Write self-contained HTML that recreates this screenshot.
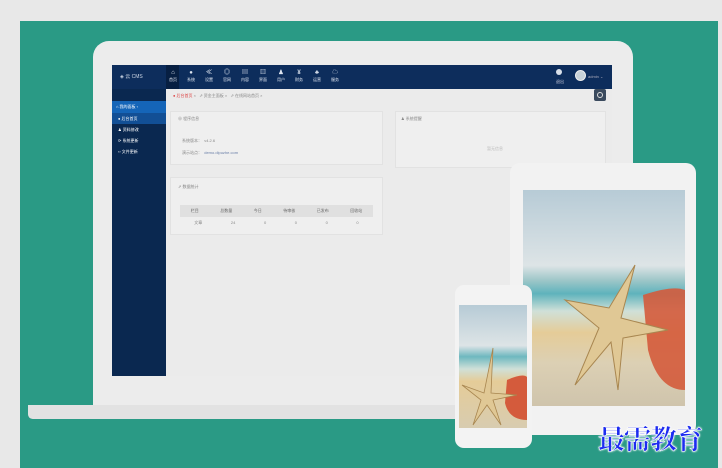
<!DOCTYPE html><html><head><meta charset="utf-8"><style>
*{margin:0;padding:0;box-sizing:border-box}
body{width:722px;height:468px;background:#e8e8e8;position:relative;overflow:hidden;font-family:"Liberation Sans","Noto Sans CJK SC",sans-serif}
.abs{position:absolute}
.t{font-size:4px;color:#888}
.nav{display:flex;gap:0}
.nav div{width:18px;text-align:center;color:#dfe6f0;font-size:4px;line-height:6px}
.nav b{display:block;font-size:6px;line-height:8px}
</style></head><body>
<div class="abs" style="left:20px;top:21px;width:698px;height:447px;background:#2a9a85"></div>
<div class="abs" style="left:93px;top:41px;width:540px;height:372px;background:#ececec;border-radius:16px 16px 0 0"></div>
<div class="abs" style="left:28px;top:405px;width:470px;height:14px;background:#e2e2e2;border-radius:0 0 30px 10px"></div>
<div class="abs" style="left:112px;top:65px;width:500px;height:311px;background:#ebebeb"></div>
<div class="abs" style="left:112px;top:65px;width:500px;height:24px;background:#0d2d5c"></div>
<div class="abs" style="left:112px;top:89px;width:54px;height:287px;background:#0a2850"></div>
<div class="abs" style="left:112px;top:101px;width:54px;height:12px;background:#1565b8"></div>
<div class="abs" style="left:112px;top:113px;width:54px;height:11px;background:#124f95"></div>
<div class="abs" style="left:166px;top:65px;width:13px;height:24px;background:#071f42"></div>
<div class="abs t" style="left:120px;top:73px;color:#cfd8e6;font-size:5px">◈ 云 CMS</div>
<div class="abs nav" style="left:164px;top:69px"><div><b>⌂</b>首页</div><div><b>●</b>系统</div><div><b>≪</b>设置</div><div><b>◎</b>官网</div><div><b>▤</b>内容</div><div><b>▥</b>界面</div><div><b>♟</b>用户</div><div><b>¥</b>财务</div><div><b>♣</b>运营</div><div><b>☁</b>服务</div></div>
<div class="abs" style="left:556px;top:69px;width:6px;height:6px;border-radius:50%;background:#d8e0ea"></div>
<div class="abs t" style="left:556px;top:79px;color:#ccd">退出</div>
<div class="abs" style="left:575px;top:70px;width:11px;height:11px;border-radius:50%;background:#c8d2d8;border:1px solid #eee"></div>
<div class="abs t" style="left:588px;top:74px;color:#aab">admin ⌄</div>
<div class="abs t" style="left:116px;top:104px;color:#fff">⌂ 我的面板 ‹</div>
<div class="abs t" style="left:118px;top:116px;color:#fff">● 后台首页</div>
<div class="abs t" style="left:118px;top:127px;color:#fff">♟ 资料修改</div>
<div class="abs t" style="left:118px;top:138px;color:#fff">⟳ 系统更新</div>
<div class="abs t" style="left:118px;top:149px;color:#fff">‹› 文件更新</div>
<div class="abs t" style="left:173px;top:93px"><span style="color:#d44">● 后台首页</span> × &nbsp; ⇗ 资金主面板 × &nbsp; ⇗ 在线网站首页 ×</div>
<div class="abs" style="left:594px;top:89px;width:12px;height:12px;background:#3a4a5e;border-radius:2px"></div>
<div class="abs" style="left:597px;top:92px;width:6px;height:6px;border:1.5px solid #ddd;border-radius:50%"></div>
<div class="abs" style="left:170px;top:111px;width:213px;height:54px;background:#efefef;border:1px solid #e2e2e2"></div>
<div class="abs t" style="left:178px;top:116px">⊕ 程序信息</div>
<div class="abs t" style="left:182px;top:138px">系统版本： &nbsp;v4.2.6</div>
<div class="abs t" style="left:182px;top:150px">演示站点： &nbsp;<span style="color:#6a7fa8">demo.dipuzhe.com</span></div>
<div class="abs" style="left:395px;top:111px;width:211px;height:57px;background:#efefef;border:1px solid #e2e2e2"></div>
<div class="abs t" style="left:401px;top:116px">♟ 系统提醒</div>
<div class="abs t" style="left:487px;top:146px;color:#bbb">暂无信息</div>
<div class="abs" style="left:170px;top:177px;width:213px;height:58px;background:#efefef;border:1px solid #e2e2e2"></div>
<div class="abs t" style="left:178px;top:184px">⇗ 数据统计</div>
<div class="abs" style="left:180px;top:205px;width:193px;height:12px;background:#e0e0e0"></div>
<div class="abs t" style="left:180px;top:208px;width:193px;display:flex;justify-content:space-around;color:#666"><span>栏目</span><span>总数量</span><span>今日</span><span>待审核</span><span>已发布</span><span>回收站</span></div>
<div class="abs t" style="left:180px;top:220px;width:193px;display:flex;justify-content:space-around"><span>文章</span><span>24</span><span>0</span><span>0</span><span>0</span><span>0</span></div>
<!-- tablet -->
<div class="abs" style="left:510px;top:163px;width:186px;height:272px;background:#f2f2f2;border-radius:10px"></div>
<div class="abs" style="left:523px;top:190px;width:162px;height:216px;background:linear-gradient(#b7cbd6 0%,#dde4e6 35%,#9cc6c8 42%,#5fb3bc 48%,#cfe0d8 56%,#e5cc98 66%,#dcd0b4 80%,#cfc4ac 100%)"></div>
<svg class="abs" style="left:523px;top:190px" width="162" height="216" viewBox="0 0 162 216"><path d="M120 105 Q150 95 162 100 L162 200 Q135 200 125 160Z" fill="#d45b3c" opacity=".9"/><path d="M112 75 L86 118 L42 110 L76 138 L52 195 L88 152 L95 200 L100 148 L145 140 L98 128Z" fill="#e0c895" stroke="#a88650" stroke-width="1"/></svg>
<!-- phone -->
<div class="abs" style="left:455px;top:285px;width:77px;height:163px;background:#f3f3f3;border-radius:9px"></div>
<div class="abs" style="left:459px;top:305px;width:68px;height:123px;background:linear-gradient(#b7cbd6 0%,#dde4e6 33%,#6eb8bf 42%,#cfe0d8 52%,#e5cc98 62%,#d8ccb0 100%)"></div>
<svg class="abs" style="left:459px;top:305px" width="68" height="123" viewBox="0 0 68 123"><path d="M48 75 Q64 68 68 72 L68 115 Q50 115 46 98Z" fill="#d45b3c"/><path d="M34 43 L25 88 L3 80 L22 95 L14 120 L28 100 L42 120 L34 95 L58 90 L32 88Z" fill="#e0c895" stroke="#a88650" stroke-width=".8"/></svg>
<div class="abs" style="left:598px;top:418px;font-family:'Noto Serif CJK SC',serif;font-size:27px;font-weight:bold;color:#1d2cf0;-webkit-text-stroke:.5px #fff;text-shadow:0 0 2px #fff,0 0 2px #fff;letter-spacing:-1px">最需教育</div>
</body></html>
